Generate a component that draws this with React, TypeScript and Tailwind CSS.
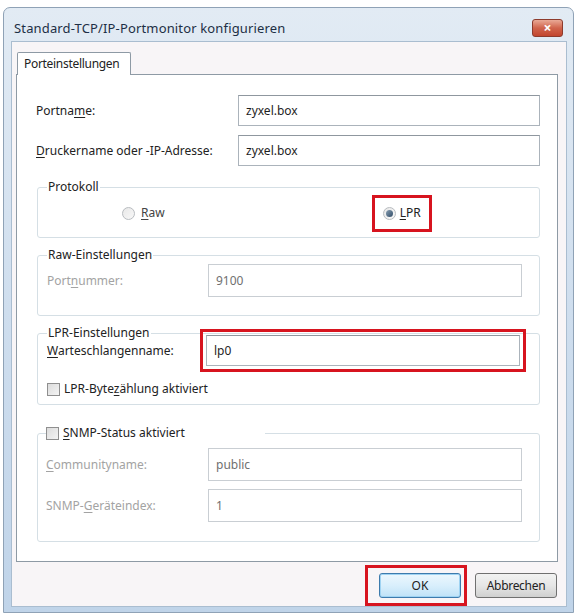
import type { ReactNode } from "react";

// Underlined access-key letter inside a label
function Key({ children }: { children: ReactNode }) {
  return <span className="underline underline-offset-2">{children}</span>;
}

function TextBox({ value, disabled }: { value: string; disabled?: boolean }) {
  return (
    <div
      className={
        disabled
          ? "h-[33px] w-full border border-[#c9ced3] bg-white px-[7px] flex items-center text-[#707070]"
          : "h-[31px] w-full border border-[#abb3bb] border-t-[#8f979f] bg-white px-[7px] flex items-center text-[#1e1e1e]"
      }
    >
      {value}
    </div>
  );
}

function Radio({ checked }: { checked?: boolean }) {
  return (
    <span className="w-[13px] h-[13px] rounded-full border border-[#b8bcc0] bg-gradient-to-br from-[#e8e8e8] to-[#f8f8f8] flex items-center justify-center">
      {checked && <span className="w-[7px] h-[7px] rounded-full bg-gradient-to-br from-[#8aa0b4] to-[#2f4b66]" />}
    </span>
  );
}

function Checkbox() {
  return (
    <span className="w-[13px] h-[13px] border border-[#8f8f8f] bg-gradient-to-br from-[#dcdcdc] to-[#f4f4f4] shrink-0" />
  );
}

export default function App() {
  return (
    <div className="w-[578px] h-[615px] bg-white pt-[7px] pl-[3px] overflow-hidden font-['Noto_Sans','Liberation_Sans',sans-serif] text-[12px] leading-[16px] text-[#222]">
      <div className="w-[571px] h-[606px] rounded-t-[7px] border border-[#8fa2b6] bg-gradient-to-b from-[#e2ebf4] via-[#cfdeee] to-[#c0d4e9] flex flex-col">
        {/* title bar */}
        <div className="h-[33px] shrink-0 flex items-center justify-between pt-[7px] pl-[10px] pr-[10px]">
          <span className="text-[13px] text-[#1d2f45] tracking-[0.15px]">Standard-TCP/IP-Portmonitor konfigurieren</span>
          <div className="w-[31px] h-[18px] rounded-[3px] border border-[#8d3b2d] bg-gradient-to-b from-[#e9a996] via-[#d0644c] to-[#c2452e] flex items-center justify-center text-white text-[14px] font-bold leading-none">
            ×
          </div>
        </div>

        {/* client area */}
        <div className="ml-[7px] mr-[6px] flex-1 bg-[#f8f5f7] border border-[#aabdd0] flex flex-col">
          {/* tab */}
          <div className="pl-[5px] pt-[10px] flex">
            <div className="relative z-10 -mb-px w-[114px] h-[23px] border border-b-0 border-[#8e9aa5] rounded-t-[2px] bg-white pl-[6px] pt-[3px] text-[12px] tracking-[-0.3px]">
              Porteinstellungen
            </div>
          </div>

          {/* tab page */}
          <div className="ml-[4px] w-[542px] h-[488px] border border-[#8e9aa5] bg-white pl-[19px] pr-[16px] pt-[20px]">
            <div className="flex items-center">
              <span className="w-[202px]">
                Portna<Key>m</Key>e:
              </span>
              <div className="w-[302px]">
                <TextBox value="zyxel.box" />
              </div>
            </div>
            <div className="flex items-center mt-[9px]">
              <span className="w-[202px]">
                <Key>D</Key>ruckername oder -IP-Adresse:
              </span>
              <div className="w-[302px]">
                <TextBox value="zyxel.box" />
              </div>
            </div>

            {/* Protokoll */}
            <fieldset className="mt-[13px] ml-[1px] w-[503px] h-[59px] border border-[#d5dfe5] rounded-[3px] pl-[9px]">
              <legend className="px-[1px] text-[12px] leading-[16px]">Protokoll</legend>
              <div className="flex items-center h-[36px]">
                <span className="ml-[75px] flex items-center gap-[6px] text-[#444]">
                  <Radio />
                  <span>
                    <Key>R</Key>aw
                  </span>
                </span>
                <span className="ml-[207px] border-[3px] border-[#d7141f] w-[60px] h-[37px] flex items-center pl-[8px] gap-[4px]">
                  <Radio checked />
                  <span>
                    <Key>L</Key>PR
                  </span>
                </span>
              </div>
            </fieldset>

            {/* Raw-Einstellungen */}
            <fieldset className="mt-[9px] ml-[1px] w-[503px] h-[69px] border border-[#d5dfe5] rounded-[3px] pl-[9px] pr-[17px]">
              <legend className="px-[1px]">Raw-Einstellungen</legend>
              <div className="flex items-center mt-[1px]">
                <span className="w-[161px] text-[#a3a3a3]">
                  Port<Key>n</Key>ummer:
                </span>
                <div className="flex-1">
                  <TextBox value="9100" disabled />
                </div>
              </div>
            </fieldset>

            {/* LPR-Einstellungen */}
            <fieldset className="mt-[9px] ml-[1px] w-[503px] h-[80px] border border-[#d5dfe5] rounded-[3px] pl-[9px] pr-[13px]">
              <legend className="px-[1px]">LPR-Einstellungen</legend>
              <div className="flex items-center -mt-[12px]">
                <span className="w-[153px]">
                  <Key>W</Key>arteschlangenname:
                </span>
                <div className="flex-1 border-[3px] border-[#d7141f] p-[3px]">
                  <TextBox value="lp0" />
                </div>
              </div>
              <div className="flex items-center gap-[4px] mt-[9px]">
                <Checkbox />
                <span>
                  LPR-Byte<Key>z</Key>ählung aktiviert
                </span>
              </div>
            </fieldset>

            {/* SNMP */}
            <fieldset className="mt-[20px] ml-[1px] w-[503px] h-[117px] border border-[#d5dfe5] rounded-[3px] pl-[8px] pr-[17px]">
              <legend className="pr-[80px] flex items-center gap-[4px]">
                <Checkbox />
                <span>
                  <Key>S</Key>NMP-Status aktiviert
                </span>
              </legend>
              <div className="flex items-center mt-[7px]">
                <span className="w-[162px] text-[#a3a3a3]">
                  <Key>C</Key>ommunityname:
                </span>
                <div className="flex-1">
                  <TextBox value="public" disabled />
                </div>
              </div>
              <div className="flex items-center mt-[8px]">
                <span className="w-[162px] text-[#a3a3a3]">
                  SNMP-<Key>G</Key>eräteindex:
                </span>
                <div className="flex-1">
                  <TextBox value="1" disabled />
                </div>
              </div>
            </fieldset>
          </div>

          {/* dialog buttons */}
          <div className="flex justify-end items-center pr-[9px] mt-[3px] gap-[8px]">
            <div className="border-[3px] border-[#d7141f] pl-[11px] pr-[3px] py-[5px]">
              <div className="w-[82px] h-[25px] rounded-[3px] border border-[#3d7bad] bg-gradient-to-b from-[#ecf7fd] via-[#d9effc] to-[#bfe2f7] flex items-center justify-center shadow-[inset_0_0_0_1px_#9fd3f2]">
                OK
              </div>
            </div>
            <div className="w-[82px] h-[25px] rounded-[3px] border border-[#707070] bg-gradient-to-b from-[#f2f2f2] via-[#e6e6e6] to-[#d0d0d0] flex items-center justify-center tracking-[-0.3px]">
              Abbrechen
            </div>
          </div>
        </div>
        <div className="h-[9px] shrink-0 border-b border-[#7d8fa2]" />
      </div>
    </div>
  );
}
